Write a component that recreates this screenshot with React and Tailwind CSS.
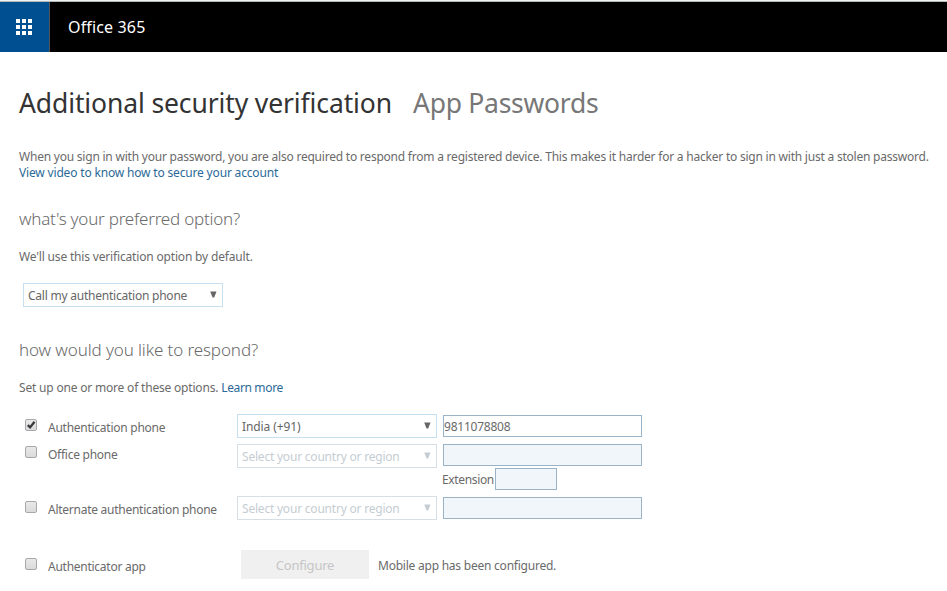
const DOTS = Array.from({ length: 9 }, (_, i) => i);

function Checkbox({ checked }) {
  return (
    <span
      role="checkbox"
      aria-checked={Boolean(checked)}
      className="block h-3 w-3 shrink-0 rounded-[2px] border border-[#a8a8a8] bg-gradient-to-b from-[#e9e9e9] to-[#dadada]"
    >
      {checked && (
        <svg viewBox="0 0 10 10" className="h-[10px] w-[10px] overflow-visible">
          <path d="M1.8 5.2 L4.1 7.4 L8.5 1.8" fill="none" stroke="#38383c" strokeWidth="2.3" />
        </svg>
      )}
    </span>
  );
}

function Select({ children, disabled, tracking = "tracking-[-0.24px]" }) {
  return (
    <div
      className={`flex h-6 w-[200px] shrink-0 items-center justify-between border bg-white pr-[5px] pl-1 ${
        disabled ? "border-[#d6dfe5] text-[#c5cdd3]" : "border-[#c6dff1] text-[#666666]"
      }`}
    >
      <span className={`pt-px text-[12px] leading-4 whitespace-nowrap ${tracking}`}>{children}</span>
      <svg viewBox="0 0 7 7" className="mb-0.5 h-[7px] w-[7px]">
        <path d="M0.2 0.5 H6.5 L4.2 6.5 H2.6 Z" fill="currentColor" />
      </svg>
    </div>
  );
}

function Field({ value, className = "w-[199px]", disabled }) {
  return (
    <div
      className={`h-[22px] shrink-0 border border-[#9bb3c6] text-[12px] leading-[21px] ${
        disabled ? "bg-[#f1f6fb]" : "bg-white"
      } ${className}`}
    >
      {value}
    </div>
  );
}

function Option({ label, checked }) {
  return (
    <div className="flex w-[214px] shrink-0 pl-0.5">
      <Checkbox checked={checked} />
      <span className="ml-[11px] pt-px leading-4 tracking-[-0.26px] whitespace-nowrap">{label}</span>
    </div>
  );
}

export default function App() {
  return (
    <div className="h-[591px] w-[947px] overflow-hidden bg-white font-['Noto_Sans','Open_Sans',sans-serif] text-[12px] tracking-[-0.23px] text-[#6a6a6a]">
      <div className="h-0.5 border-b border-[#b3b8b8] bg-[#eef2f2]" />
      <header className="flex h-[50px] bg-black">
        <div className="flex w-[50px] items-center border-r border-[#555555] bg-[#004f91] pl-4">
          <div className="grid grid-cols-3 gap-0.5">
            {DOTS.map((dot) => (
              <span key={dot} className="h-1 w-1 bg-white" />
            ))}
          </div>
        </div>
        <span className="pl-[18px] text-[16px] leading-[50px] tracking-[0.15px] whitespace-nowrap text-white">
          Office 365
        </span>
      </header>

      <main className="pl-[19px]">
        <div className="mt-[31px] flex h-10 text-[26.5px] leading-10 whitespace-nowrap">
          <h1 className="w-[394px] tracking-[-0.12px] text-[#333333]">Additional security verification</h1>
          <span className="tracking-[-0.28px] text-[#777777]">App Passwords</span>
        </div>

        <p className="mt-[26px] leading-4 tracking-[-0.22px] whitespace-nowrap">
          When you sign in with your password, you are also required to respond from a registered device. This makes it
          harder for a hacker to sign in with just a stolen password.
        </p>
        <a className="block leading-4 tracking-[-0.17px] text-[#2b6a98]">
          View video to know how to secure your account
        </a>

        <h2 className="mt-[26px] text-[17px] leading-6 font-light tracking-[-0.22px]">what's your preferred option?</h2>
        <p className="mt-[18px] leading-4 tracking-[-0.17px]">We'll use this verification option by default.</p>
        <div className="mt-[18px] pl-1">
          <Select tracking="tracking-[-0.23px]">Call my authentication phone</Select>
        </div>

        <h2 className="mt-[31px] text-[17px] leading-6 font-light tracking-[-0.11px]">how would you like to respond?</h2>
        <p className="mt-[18px] leading-4 tracking-[-0.19px]">
          Set up one or more of these options.{" "}
          <a className="tracking-[-0.35px] text-[#2b6a98]">Learn more</a>
        </p>

        <div className="mt-[18px] pl-1">
          <div className="flex h-[30px]">
            <div className="pt-[5px]">
              <Option label="Authentication phone" checked />
            </div>
            <Select tracking="tracking-[-0.09px]">India (+91)</Select>
            <div className="pt-px pl-1.5">
              <Field value="9811078808" />
            </div>
          </div>
          <div className="flex h-[52px]">
            <div className="pt-[2px]">
              <Option label="Office phone" />
            </div>
            <Select disabled tracking="tracking-[-0.21px]">
              Select your country or region
            </Select>
            <div className="pl-1.5">
              <Field disabled />
              <div className="mt-0.5 flex">
                <span className="-ml-px w-[53px] pt-1 leading-4 tracking-[-0.35px]">Extension</span>
                <Field disabled className="w-[62px]" />
              </div>
            </div>
          </div>
          <div className="flex h-[54px]">
            <div className="pt-[5px]">
              <Option label="Alternate authentication phone" />
            </div>
            <Select disabled tracking="tracking-[-0.21px]">
              Select your country or region
            </Select>
            <div className="pt-px pl-1.5">
              <Field disabled />
            </div>
          </div>
          <div className="flex h-[29px]">
            <div className="pt-2">
              <Option label="Authenticator app" />
            </div>
            <div className="ml-1 flex h-[29px] w-32 items-center justify-center bg-[#f0f0f0] pt-0.5 text-[13px] text-[#c6c6c6]">
              Configure
            </div>
            <span className="pt-2 pl-[9px] leading-4">Mobile app has been configured.</span>
          </div>
        </div>
      </main>
    </div>
  );
}
